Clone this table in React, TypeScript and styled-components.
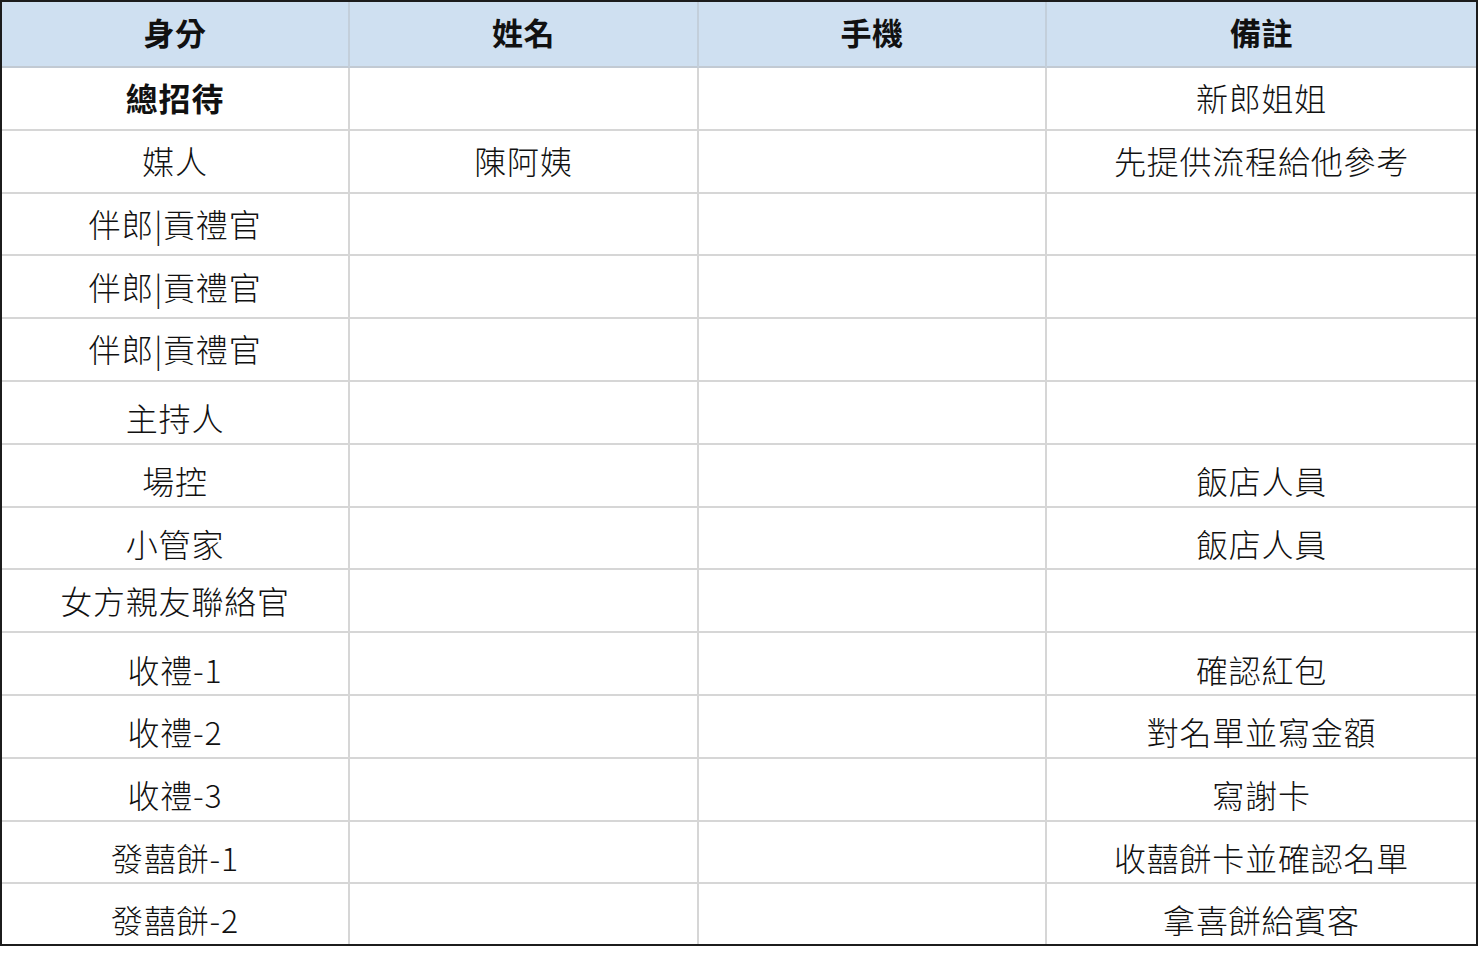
import styled, { createGlobalStyle } from "styled-components";

type VAlign = "middle" | "bottom";

interface IRow {
  role: string;
  name?: string;
  phone?: string;
  note?: string;
  bold?: boolean;
  valign: VAlign;
}

const HEADERS = ["身分", "姓名", "手機", "備註"];

const ROWS: IRow[] = [
  { role: "總招待", note: "新郎姐姐", bold: true, valign: "middle" },
  { role: "媒人", name: "陳阿姨", note: "先提供流程給他參考", valign: "middle" },
  { role: "伴郎|貢禮官", valign: "middle" },
  { role: "伴郎|貢禮官", valign: "middle" },
  { role: "伴郎|貢禮官", valign: "middle" },
  { role: "主持人", valign: "bottom" },
  { role: "場控", note: "飯店人員", valign: "bottom" },
  { role: "小管家", note: "飯店人員", valign: "bottom" },
  { role: "女方親友聯絡官", valign: "middle" },
  { role: "收禮-1", note: "確認紅包", valign: "bottom" },
  { role: "收禮-2", note: "對名單並寫金額", valign: "bottom" },
  { role: "收禮-3", note: "寫謝卡", valign: "bottom" },
  { role: "發囍餅-1", note: "收囍餅卡並確認名單", valign: "bottom" },
  { role: "發囍餅-2", note: "拿喜餅給賓客", valign: "bottom" },
];

const GlobalStyle = createGlobalStyle`
  html, body {
    margin: 0;
    padding: 0;
    background: #ffffff;
  }
  body {
    font-family: "Noto Sans CJK TC", "Noto Sans", sans-serif;
    color: #111111;
  }
`;

const App = () => {
  return (
    <>
      <GlobalStyle />
      <Sheet>
        {HEADERS.map((label, i) => (
          <HeaderCell key={label} $last={i === HEADERS.length - 1}>
            {label}
          </HeaderCell>
        ))}
        {ROWS.map((row, r) => {
          const lastRow = r === ROWS.length - 1;
          const values = [row.role, row.name, row.phone, row.note];
          return values.map((value, c) => (
            <Cell
              key={`${r}-${c}`}
              $valign={row.valign}
              $bold={!!row.bold && c === 0}
              $lastCol={c === 3}
              $lastRow={lastRow}
            >
              {value}
            </Cell>
          ));
        })}
      </Sheet>
    </>
  );
};

const Sheet = styled.div`
  width: 1478px;
  height: 946px;
  box-sizing: border-box;
  border: 2px solid #1c1c1c;
  display: grid;
  grid-template-columns: 348px 349px 348px 1fr;
  grid-template-rows: 66px repeat(13, 62.8px) 1fr;
`;

const HeaderCell = styled.div<{ $last: boolean }>`
  box-sizing: border-box;
  display: flex;
  align-items: center;
  justify-content: center;
  background: #cfe0f1;
  border-right: ${({ $last }) => ($last ? "none" : "2px solid #c3cfdb")};
  border-bottom: 2px solid #c2cad3;
  font-size: 31px;
  font-weight: 700;
  line-height: 1.2;
  padding-bottom: 4px;
  letter-spacing: 0.5px;
`;

const Cell = styled.div<{
  $valign: VAlign;
  $bold: boolean;
  $lastCol: boolean;
  $lastRow: boolean;
}>`
  box-sizing: border-box;
  display: flex;
  justify-content: center;
  align-items: ${({ $valign }) => ($valign === "bottom" ? "flex-end" : "center")};
  padding-bottom: ${({ $valign }) => ($valign === "bottom" ? "6px" : "2px")};
  border-right: ${({ $lastCol }) => ($lastCol ? "none" : "2px solid #d6d6d6")};
  border-bottom: ${({ $lastRow }) => ($lastRow ? "none" : "2px solid #d6d6d6")};
  font-size: 32px;
  font-weight: ${({ $bold }) => ($bold ? 700 : 300)};
  line-height: 1.2;
  letter-spacing: 0.8px;
  white-space: nowrap;
`;

export default App;
